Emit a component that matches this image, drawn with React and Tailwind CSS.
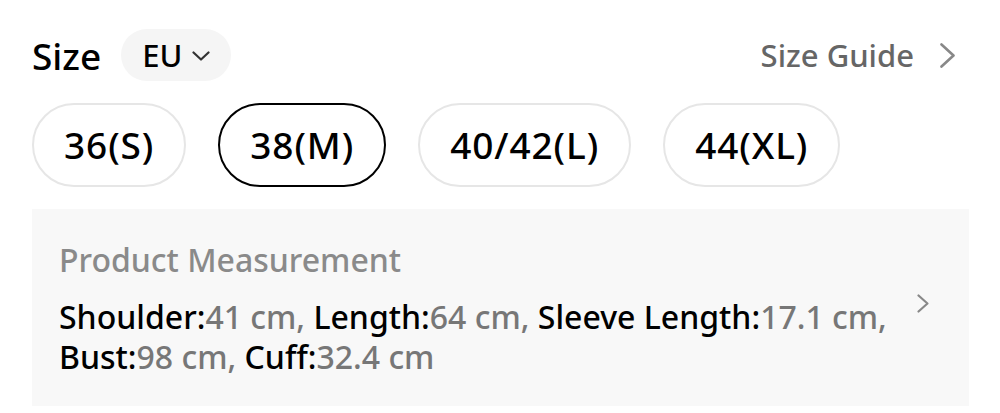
const sizes = ["36(S)", "38(M)", "40/42(L)", "44(XL)"]

const measures = [
  ["Shoulder", "41 cm"],
  ["Length", "64 cm"],
  ["Sleeve Length", "17.1 cm"],
  ["Bust", "98 cm"],
  ["Cuff", "32.4 cm"],
]

// thin chevron, drawn to the box it is given
function Chevron({ w, h, dir = "right", stroke = 2.4, className }) {
  const pts = dir === "right" ? `1.5,1.5 ${w - 1.5},${h / 2} 1.5,${h - 1.5}` : `1.5,1.5 ${w / 2},${h - 1.5} ${w - 1.5},1.5`
  return (
    <svg width={w} height={h} viewBox={`0 0 ${w} ${h}`} className={className}>
      <polyline points={pts} fill="none" stroke="currentColor" strokeWidth={stroke} strokeLinecap="round" strokeLinejoin="round" />
    </svg>
  )
}

export default function App() {
  const selected = "38(M)"

  return (
    <div className="w-[1000px] h-[413px] bg-white px-8 pt-[29px] font-['Noto_Sans',sans-serif] font-medium">
      {/* header: title + unit picker + guide link */}
      <div className="flex items-center justify-between h-[52px]">
        <div className="flex items-center gap-[20px]">
          <span className="text-[37px] text-black leading-none">Size</span>
          <button className="h-[52px] w-[110px] rounded-full bg-[#f5f5f5] flex items-center justify-center gap-[10px] text-[31px] text-black font-medium">
            EU
            <Chevron w={18} h={10} dir="down" stroke={2.2} className="text-[#333] mt-[2px]" />
          </button>
        </div>
        <div className="flex items-center gap-[26px] pr-[13px] text-[#666]">
          <span className="text-[31px]">Size Guide</span>
          <Chevron w={15} h={25} stroke={2.6} className="text-[#888]" />
        </div>
      </div>

      {/* size options */}
      <div className="flex gap-8 mt-[22px]">
        {sizes.map((s) => (
          <button
            key={s}
            className={
              s === selected
                ? "h-[84px] px-[30px] rounded-full border-2 border-black text-[37px] tracking-[0.9px] text-black font-medium"
                : "h-[84px] px-[30px] rounded-full border-2 border-[#e6e6e6] text-[37px] tracking-[0.9px] text-black font-medium"
            }
          >
            {s}
          </button>
        ))}
      </div>

      {/* measurement card */}
      <div className="mt-[22px] w-[937px] h-[197px] bg-[#f8f8f8] pl-[27px] pr-[40px] pt-[29px]">
        <div className="text-[32px] text-[#8a8a8a] leading-[44px]">Product Measurement</div>
        <div className="flex items-start justify-between mt-[15px]">
          <p className="w-[860px] text-[32px] leading-[40px] text-black">
            {measures.map(([k, v], i) => (
              <span key={k}>
                {k}:<span className="text-[#777]">{v}{i < measures.length - 1 ? ", " : ""}</span>
                {i === 2 ? <br /> : null}
              </span>
            ))}
          </p>
          <Chevron w={12} h={19} stroke={2.2} className="text-[#888] mt-[-3px]" />
        </div>
      </div>
    </div>
  )
}
